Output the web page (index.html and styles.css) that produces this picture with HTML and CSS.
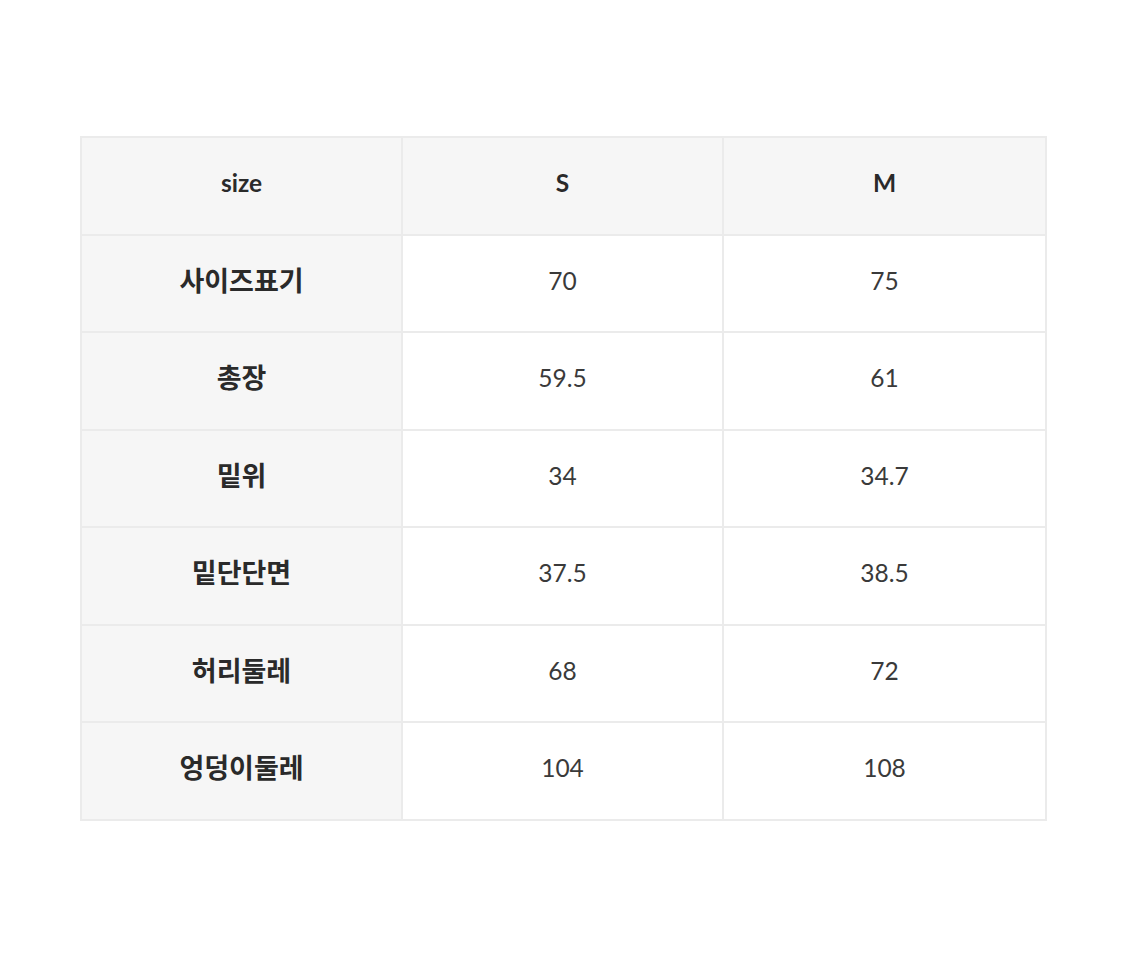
FILE: index.html
```html
<!DOCTYPE html>
<html lang="ko">
<head>
<meta charset="utf-8">
<link rel="stylesheet" href="styles.css">
</head>
<body>
<div class="page">
<table class="size-table">
<colgroup><col class="c1"><col class="c2"><col class="c3"></colgroup>
<tr class="head"><th>size</th><th>S</th><th>M</th></tr>
<tr><th class="ko">사이즈표기</th><td>70</td><td>75</td></tr>
<tr><th class="ko">총장</th><td>59.5</td><td>61</td></tr>
<tr><th class="ko">밑위</th><td>34</td><td>34.7</td></tr>
<tr><th class="ko">밑단단면</th><td>37.5</td><td>38.5</td></tr>
<tr><th class="ko">허리둘레</th><td>68</td><td>72</td></tr>
<tr><th class="ko">엉덩이둘레</th><td>104</td><td>108</td></tr>
</table>
</div>
</body>
</html>
```

FILE: styles.css
```css
html, body {
  margin: 0;
  padding: 0;
  background: #ffffff;
}
.page {
  padding: 136px 0 0 80px;
}
.size-table {
  width: 965px;
  border-collapse: collapse;
  table-layout: fixed;
  font-family: Lato, "Noto Sans CJK KR", sans-serif;
  font-size: 24.5px;
  line-height: 30px;
}
.c1 { width: 321px; }
.c2 { width: 321px; }
.c3 { width: 323px; }
.size-table th,
.size-table td {
  height: 90.5px;
  padding: 0 0 5px 0;
  border: 2px solid #ebebeb;
  text-align: center;
  vertical-align: middle;
}
.size-table th {
  background: #f6f6f6;
  color: #2a2a2a;
  font-weight: 700;
}
.size-table th.ko {
  font-size: 27px;
}
.size-table td {
  color: #3a3a3a;
  font-weight: 400;
}
```
